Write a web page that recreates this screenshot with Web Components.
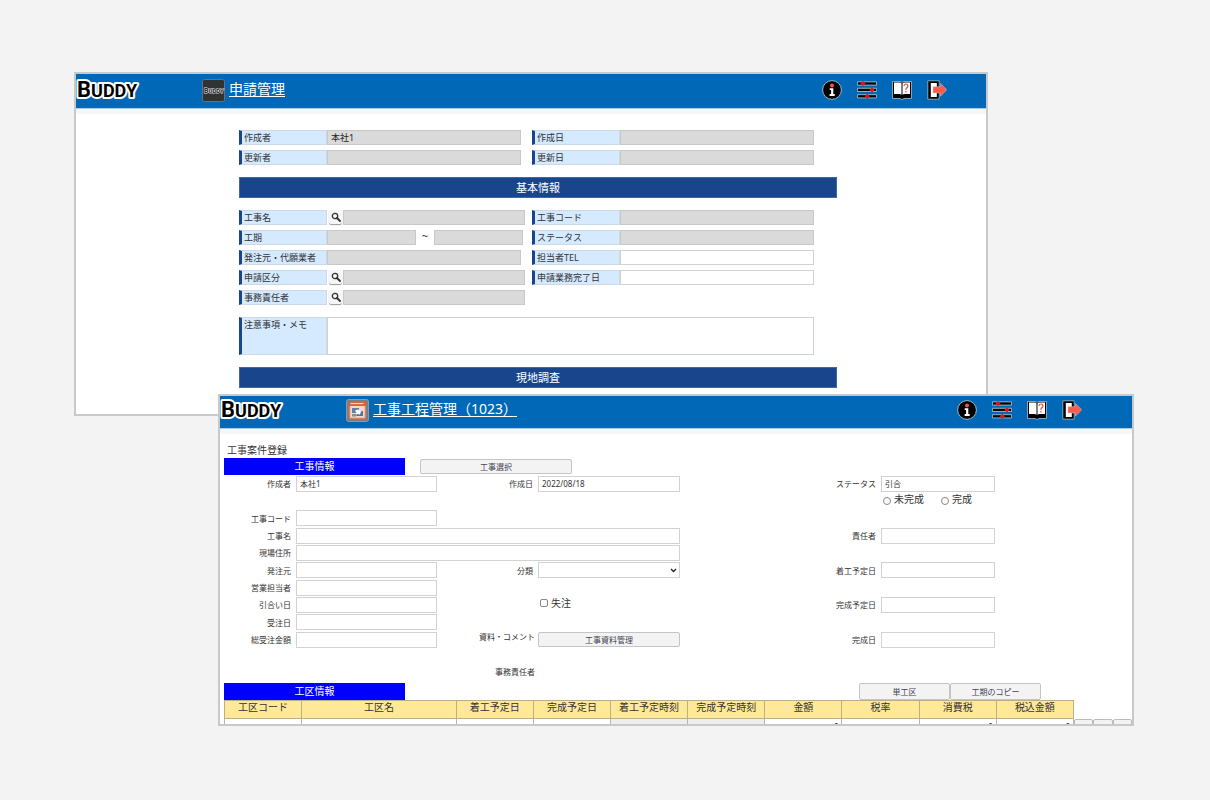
<!DOCTYPE html>
<html lang="ja">
<head>
<meta charset="utf-8">
<meta name="viewport" content="width=device-width, initial-scale=1">
<title>BUDDY 工事工程管理</title>
<style>
  html { background: #f3f3f3; }
  body {
    margin: 0;
    font-family: "Noto Sans", "Noto Sans CJK JP", sans-serif;
    color: #333;
  }
</style>
</head>
<body>
<buddy-stage>
  <buddy-window class="request">
    <buddy-header slot="header" heading="申請管理" app="request"></buddy-header>
    <request-form></request-form>
  </buddy-window>
  <buddy-window class="project">
    <buddy-header slot="header" heading="工事工程管理（1023）" app="project"></buddy-header>
    <project-form></project-form>
  </buddy-window>
</buddy-stage>

<script>
const define = (name, html, setup) => {
  const template = document.createElement('template');
  template.innerHTML = html;
  customElements.define(name, class extends HTMLElement {
    constructor() {
      super();
      this.attachShadow({ mode: 'open' }).append(template.content.cloneNode(true));
    }
    connectedCallback() {
      if (setup && !this.ready) { this.ready = true; setup(this, this.shadowRoot); }
    }
  });
};

define('buddy-stage', `
  <style>
    :host { display: flex; flex-direction: column; padding: 72px 76px 74px 74px; }
    ::slotted(.request) { height: 344px; margin-right: 146px; --bar: 34px; --top: 5px; --end: 39px; }
    ::slotted(.project) { height: 332px; margin: -22px 0 0 144px; --bar: 32px; --top: 3px; --end: 50px; }
  </style>
  <slot></slot>`);

define('buddy-window', `
  <style>
    :host { display: block; box-sizing: border-box; position: relative; overflow: hidden;
            border: 2px solid #c9c9c9; background: #fff; }
    .strip { height: 5px; background: #f6f6f6; border-top: 1px solid #a5cdea; }
  </style>
  <slot name="header"></slot>
  <div class="strip"></div>
  <slot></slot>`);

define('buddy-header', `
  <style>
    :host { display: flex; align-items: flex-start; box-sizing: border-box; height: var(--bar);
            padding: var(--top) var(--end) 0 0; background: #0068b7; }
    .logo { width: 126px; height: 24px; flex: none; overflow: visible; }
    .app { width: 23px; height: 23px; flex: none; margin-right: 4px; }
    a { color: #fff; font-size: 14px; line-height: 19px; white-space: nowrap; text-underline-offset: 2px; }
    nav { margin-left: auto; display: flex; gap: 15px; padding-top: 1px; }
    button { all: unset; width: 20px; height: 20px; }
    svg { display: block; }
  </style>
  <svg class="logo" viewBox="0 0 126 24" role="img" aria-label="BUDDY">
    <text x="1" y="18" font-family="Roboto, sans-serif" font-weight="700" fill="#000" stroke="#fff"
          stroke-width="4" stroke-linejoin="round" paint-order="stroke" font-size="22">B<tspan font-size="18">UDDY</tspan></text>
  </svg>
  <span class="app"></span>
  <a href="#"></a>
  <nav>
    <button aria-label="情報"><svg width="20" height="20" viewBox="0 0 20 20">
      <circle cx="10" cy="10" r="9.4" fill="#000" stroke="#9db9cd"/>
      <circle cx="10" cy="5.5" r="2" fill="#f2553f"/>
      <path d="M7.7 8.3h3.6v5.8h1.4v1.8H7.6v-1.8h1.5V10H7.700z" fill="#fff"/></svg></button>
    <button aria-label="設定"><svg width="20" height="20" viewBox="0 0 20 20">
      <g fill="#000" stroke="#b8cedb" stroke-width=".8"><path d="M.4 1.900h19.200v3.200H.4zM.4 8.300h19.200v3.200H.4zM.4 14.700h19.200v3.200H.4z"/></g>
      <path d="M6 .9l2.600 2.600L6 6.100 3.400 3.500zM15 7.300l2.600 2.600-2.600 2.600-2.600-2.600zM10.300 13.700l2.600 2.600-2.600 2.600-2.600-2.600z" fill="#e0141c"/></svg></button>
    <button aria-label="ヘルプ"><svg width="20" height="20" viewBox="0 0 20 20">
      <path d="M.5 1.500h7.500l2 .8 2-.8h7.500v17h-7.500L10 19.600l-2-1.100H.5z" fill="#000" stroke="#a8c0cf" stroke-width=".8"/>
      <path d="M2 2.400h5.500q1.500.2 2 1v11.300q-1-.7-2-.7H2zM18 2.400h-5.500q-1.500.2-2 1v11.300q1-.7 2-.7H18z" fill="#fff"/>
      <path d="M11.900 6q.2-2 2-2 2 0 2 1.900 0 1.100-1.100 1.900-.9.700-.9 2" fill="none" stroke="#e8432f" stroke-width="1.200"/>
      <circle cx="13.900" cy="11.800" r=".8" fill="#e8432f"/></svg></button>
    <button aria-label="ログアウト"><svg width="20" height="20" viewBox="0 0 20 20">
      <path d="M.8.800h11.400v4v12.400v2H.8z" fill="#000" stroke="#a8c0cf" stroke-width=".8"/>
      <path d="M3.800 3H9.800v14H3.800z" fill="#fff"/>
      <path d="M6 6.700h7.500V3.400l6.200 6.400-6.200 6.400v-3.300H6z" fill="#ff5a47" stroke="#c8c8cc" stroke-width=".5"/></svg></button>
  </nav>`,
(host, root) => {
  root.querySelector('a').textContent = host.getAttribute('heading');
  root.querySelector('.app').innerHTML = host.getAttribute('app') === 'request'
    ? `<svg width="23" height="23" viewBox="0 0 23 23" role="img" aria-label="アプリ">
         <rect x=".5" y=".5" width="22" height="22" rx="2" fill="#303234" stroke="#5f7482"/>
         <text x="2" y="14" font-family="Roboto, sans-serif" font-weight="700" font-size="7" fill="#222" stroke="#e8e8e8" stroke-width="1" paint-order="stroke">B<tspan font-size="6">UDDY</tspan></text></svg>`
    : `<svg width="23" height="23" viewBox="0 0 23 23" aria-hidden="true">
         <rect x=".5" y=".5" width="22" height="22" rx="2" fill="#777f86" stroke="#8d9aa5"/>
         <rect x="3.500" y="3.500" width="16" height="16" rx="1" fill="#f3d9ce" stroke="#e07c5f" stroke-width="1.500"/>
         <path d="M3 3h17v4H3z" fill="#d9623f"/><path d="M4.500 4.600h13" stroke="#fbe3d8" stroke-width="1"/>
         <path d="M6 9h7v5H6z" fill="#5f7fae"/><path d="M12 13l5-1v5h-7z" fill="#50739f"/>
         <path d="M9 11.500l3-1 3 2-1 3-3-.5z" fill="#fff"/><path d="M6 15h4v2.500H6z" fill="#7a9a71"/></svg>`;
});

/* Labelled field with a blue caption; kind: plain, search, period, memo */
define('request-field', `
  <style>
    :host { display: grid; grid-template-columns: 88px 1fr; height: 15px; padding-right: 11px; font-size: 9px; }
    :host([kind=search]) { padding-right: 7px; }
    :host([kind=period]) { padding-right: 9px; }
    :host([end]) { padding-right: 0; }
    :host([kind=memo]) { height: 38px; grid-column: span 2; padding-right: 0; }
    label { box-sizing: border-box; border: 1px solid #ccd9e6; border-left: 3px solid #19458d; padding-left: 2px;
            background: #d5e9ff; color: #333; line-height: 13px; white-space: nowrap; }
    .box { display: flex; min-width: 0; }
    input, textarea { flex: 1; min-width: 0; box-sizing: border-box; margin: 0; padding: 0 3px; font: inherit; color: #222;
            border: 1px solid #c8c8c8; border-radius: 0; background: #dadada; outline: 0; resize: none; }
    .open, textarea { background: #fff; border-color: #d2d2d2; }
    button { all: unset; box-sizing: border-box; width: 13px; height: 14px; margin: 0 1px 0 2px; display: grid; place-items: center;
             border-radius: 2px; background: #f6f6f6; box-shadow: 0 1px 1px #999; }
    .wave { width: 18px; text-align: center; line-height: 12px; font-size: 11px; }
  </style>
  <label for="f"></label><div class="box"></div>`,
(host, root) => {
  const kind = host.getAttribute('kind');
  const caption = host.getAttribute('caption');
  root.querySelector('label').textContent = caption;
  const open = host.hasAttribute('open');
  const input = `<input id="f" ${open ? 'class="open"' : 'readonly'} value="${host.getAttribute('value') || ''}">`;
  root.querySelector('.box').innerHTML =
    kind === 'memo' ? '<textarea id="f"></textarea>' :
    kind === 'period' ? `${input}<span class="wave">~</span><input readonly aria-label="${caption} 終了">` :
    kind === 'search' ? `<button aria-label="${caption}を検索"><svg width="10" height="10" viewBox="0 0 10 10">
        <circle cx="4" cy="4" r="2.700" fill="none" stroke="#333" stroke-width="1.300"/>
        <path d="M6 6l3 3" stroke="#333" stroke-width="1.800" stroke-linecap="round"/></svg></button>${input}` : input;
});

define('section-banner', `
  <style>
    :host { display: block; box-sizing: border-box; height: 21px; background: #19458d; border: 1px solid #4168a6;
            color: #fff; text-align: center; font-size: 11px; line-height: 19px; }
  </style><slot></slot>`);

define('request-form', `
  <style>
    :host { display: grid; grid-template-columns: 163fr 598fr 149fr; padding-top: 16px; }
    main { grid-column: 2; display: grid; gap: 12px; }
    section { display: grid; grid-template-columns: 293fr 282fr; row-gap: 5px; margin-right: 23px; }
  </style>
  <main>
    <section>
      <request-field caption="作成者" value="本社1"></request-field>
      <request-field caption="作成日" end></request-field>
      <request-field caption="更新者"></request-field>
      <request-field caption="更新日" end></request-field>
    </section>
    <section-banner>基本情報</section-banner>
    <section>
      <request-field caption="工事名" kind="search"></request-field>
      <request-field caption="工事コード" end></request-field>
      <request-field caption="工期" kind="period"></request-field>
      <request-field caption="ステータス" end></request-field>
      <request-field caption="発注元・代願業者"></request-field>
      <request-field caption="担当者TEL" end open></request-field>
      <request-field caption="申請区分" kind="search"></request-field>
      <request-field caption="申請業務完了日" end open></request-field>
      <request-field caption="事務責任者" kind="search"></request-field>
    </section>
    <section><request-field caption="注意事項・メモ" kind="memo"></request-field></section>
    <section-banner>現地調査</section-banner>
  </main>`);

define('blue-title', `
  <style>
    :host { display: block; height: 17px; background: #00f; color: #fff; font-size: 10px; line-height: 17px; text-align: center; }
  </style><slot></slot>`);

define('soft-button', `
  <style>
    :host { display: grid; height: 15px; }
    button { box-sizing: border-box; width: 100%; height: 100%; margin: 0; padding: 0; border: 1px solid #c4c4c4; border-radius: 2px;
             background: #f3f3f3; color: #445; font: inherit; font-size: 8px; line-height: 12px; }
  </style><button><slot></slot></button>`);

/* One caption and one control, aligned to the columns of the form around it */
define('project-field', `
  <style>
    :host { display: grid; grid-template-columns: subgrid; align-items: center; font-size: 8px; min-height: 0; }
    label { text-align: right; padding-right: 5px; white-space: nowrap; }
    .box { grid-column: 2 / -1; position: relative; display: grid; }
    input, select { width: 100%; height: 16px; box-sizing: border-box; margin: 0; padding: 0 3px; font: inherit; color: #333;
            border: 1px solid #d2d2d2; border-radius: 0; background: #fff; outline: 0; appearance: none; }
    svg { position: absolute; right: 3px; top: 6px; pointer-events: none; }
  </style>
  <label for="f"></label><div class="box"></div>`,
(host, root) => {
  root.querySelector('label').textContent = host.getAttribute('caption');
  root.querySelector('.box').innerHTML = host.hasAttribute('select')
    ? `<select id="f"><option></option></select><svg width="7" height="5" viewBox="0 0 7 5"><path d="M1 1l2.500 2.500L6 1" fill="none" stroke="#222" stroke-width="1.300"/></svg>`
    : `<input id="f" value="${host.getAttribute('value') || ''}">`;
});

define('area-table', `
  <style>
    :host { display: grid; grid-template-columns: 1fr 58px; align-items: end; }
    table { width: 100%; border-collapse: collapse; table-layout: fixed; }
    col.name { width: 18.2%; }
    th { height: 17px; padding: 0; border: 1px solid #b9b08a; background: #ffe999; color: #333; font-weight: 400;
         font-size: 10px; line-height: 13px; vertical-align: top; white-space: nowrap; }
    td { padding: 0; border: 1px solid #b5b5b5; height: 18px; }
    td.off { background: #eee; }
    input { display: block; width: 100%; height: 18px; box-sizing: border-box; margin: 0; padding: 0 3px 4px; border: 0;
            background: none; font: inherit; font-size: 8px; text-align: right; }
    .tools { display: grid; grid-template-columns: repeat(3, 1fr); height: 19px; }
    .tools button { margin: 0; padding: 0; border: 1px solid #bbb; border-radius: 2px; background: #f3f3f3; }
  </style>
  <table>
    <colgroup><col><col class="name"><col><col><col><col><col><col><col><col></colgroup>
    <thead><tr></tr></thead><tbody><tr></tr></tbody>
  </table>
  <div class="tools"><button aria-label="追加"></button><button aria-label="複写"></button><button aria-label="削除"></button></div>`,
(host, root) => {
  const columns = ['工区コード', '工区名', '着工予定日', '完成予定日', '着工予定時刻', '完成予定時刻', '金額', '税率', '消費税', '税込金額'];
  root.querySelector('thead tr').innerHTML = columns.map(c => `<th scope="col">${c}</th>`).join('');
  root.querySelector('tbody tr').innerHTML = columns.map(c =>
    `<td class="${c.endsWith('時刻') ? 'off' : ''}"><input aria-label="${c}" value="${/額|消費/.test(c) ? '0' : ''}"></td>`).join('');
});

define('project-form', `
  <style>
    :host { display: block; padding: 8px 0 0 4px; }
    h1 { margin: 0; padding-left: 3px; font-size: 10px; font-weight: 400; line-height: 16px; }
    .bar { display: grid; height: 17px; align-items: center; margin-right: 58px; }
    .top { grid-template-columns: 181fr 15fr 152fr 502fr; }
    .mid { grid-template-columns: 181fr 454fr 91fr 91fr 33fr; }
    .top soft-button { grid-column: 3; }
    .mid soft-button { height: 17px; }
    .mid soft-button:first-of-type { grid-column: 3; }
    .fields { display: grid; height: 208px; margin-right: 58px;
      grid-template-columns: 72fr 141fr 101fr 142fr 201fr 114fr 79fr; grid-template-rows: repeat(12, minmax(0, 1fr)); }
    .a { grid-column: 1 / 3; } .b { grid-column: 3 / 5; } .c { grid-column: 5 / 7; } .wide { grid-column: 1 / 5; }
    .r1 { grid-row: 1; } .r3 { grid-row: 3; } .r4 { grid-row: 4; } .r5 { grid-row: 5; } .r6 { grid-row: 6; }
    .r7 { grid-row: 7; } .r8 { grid-row: 8; } .r9 { grid-row: 9; } .r10 { grid-row: 10; } .r12 { grid-row: 12; }
    .choice { display: flex; align-items: center; font-size: 10px; line-height: 14px; white-space: nowrap; }
    .choice label { display: flex; align-items: center; gap: 3px; }
    .status { grid-area: 2 / 6 / 3 / 8; gap: 17px; padding-left: 2px; align-items: flex-start; }
    .lost { grid-area: 8 / 4; padding-left: 2px; align-items: flex-start; }
    .choice input { appearance: none; box-sizing: border-box; width: 8px; height: 8px; margin: 0; border: 1px solid #888; background: #fff; border-radius: 2px; }
    .choice input[type=radio] { border-radius: 50%; align-self: flex-end; margin-bottom: 1px; }
    .note { grid-column: 3; padding-right: 3px; text-align: right; font-size: 8px; line-height: 12px; white-space: nowrap; }
    .docs { grid-area: 10 / 4; align-self: center; }
  </style>
  <h1>工事案件登録</h1>
  <div class="bar top"><blue-title>工事情報</blue-title><soft-button>工事選択</soft-button></div>
  <div class="fields">
    <project-field class="a r1" caption="作成者" value="本社1"></project-field>
    <project-field class="b r1" caption="作成日" value="2022/08/18"></project-field>
    <project-field class="c r1" caption="ステータス" value="引合"></project-field>
    <div class="choice status">
      <label><input type="radio" name="done">未完成</label>
      <label><input type="radio" name="done">完成</label>
    </div>
    <project-field class="a r3" caption="工事コード"></project-field>
    <project-field class="wide r4" caption="工事名"></project-field>
    <project-field class="c r4" caption="責任者"></project-field>
    <project-field class="wide r5" caption="現場住所"></project-field>
    <project-field class="a r6" caption="発注元"></project-field>
    <project-field class="b r6" caption="分類" select></project-field>
    <project-field class="c r6" caption="着工予定日"></project-field>
    <project-field class="a r7" caption="営業担当者"></project-field>
    <project-field class="a r8" caption="引合い日"></project-field>
    <div class="choice lost"><label><input type="checkbox">失注</label></div>
    <project-field class="c r8" caption="完成予定日"></project-field>
    <project-field class="a r9" caption="受注日"></project-field>
    <project-field class="a r10" caption="総受注金額"></project-field>
    <span class="note r10">資料・コメント</span>
    <soft-button class="docs">工事資料管理</soft-button>
    <project-field class="c r10" caption="完成日"></project-field>
    <span class="note r12">事務責任者</span>
  </div>
  <div class="bar mid"><blue-title>工区情報</blue-title><soft-button>単工区</soft-button><soft-button>工期のコピー</soft-button></div>
  <area-table></area-table>`);
</script>
</body>
</html>
